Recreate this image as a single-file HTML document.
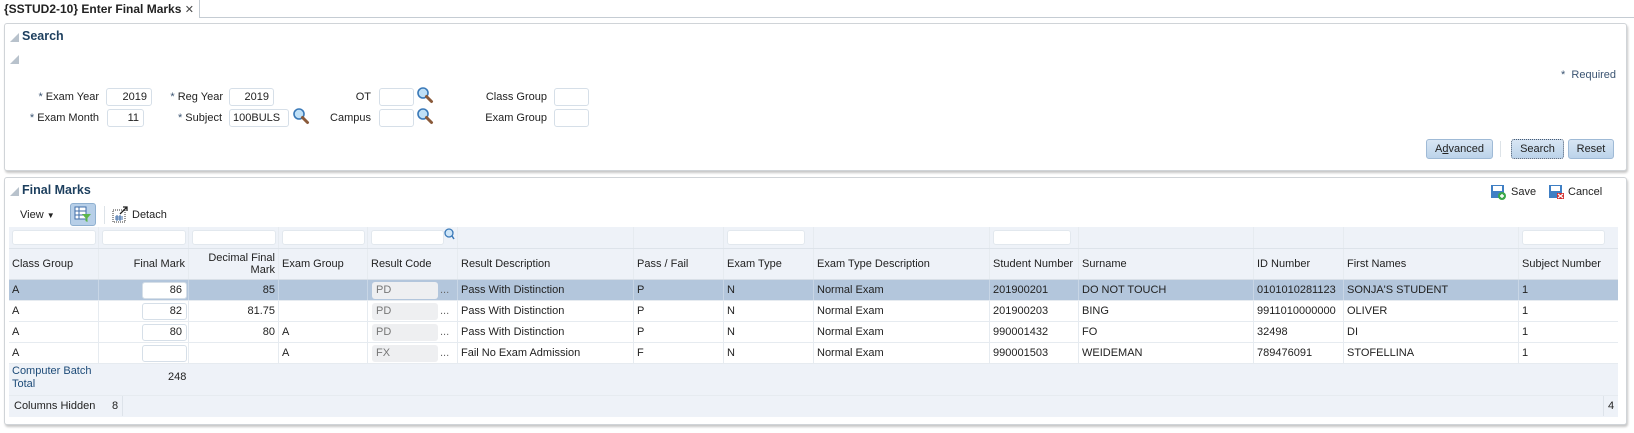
<!DOCTYPE html>
<html><head><meta charset="utf-8"><style>
*{box-sizing:border-box;margin:0;padding:0}
body{width:1634px;height:433px;background:#fff;font-family:"Liberation Sans",Tahoma,sans-serif;font-size:11px;color:#222;position:relative;overflow:hidden}
.a{position:absolute;white-space:nowrap}
.panel{position:absolute;border:1px solid #d0d4d8;border-radius:3px;background:#fff;box-shadow:1px 2px 2px #c8c8c8}
.tri{position:absolute;width:0;height:0;border-left:9px solid transparent;border-bottom:9px solid #b8c2cc}
.h{font-weight:bold;color:#1d3f5e;font-size:12.5px}
.inp{position:absolute;height:18px;border:1px solid #d6dfe8;border-radius:3px;background:#fff;text-align:right;padding-right:4px;line-height:16px}
.lbl{position:absolute;text-align:right;line-height:18px}
.btn{position:absolute;height:20px;border:1px solid #9fbad6;border-radius:3px;background:linear-gradient(#d8e6f4,#bcd3ea);text-align:center;line-height:18px;color:#222}
.row{position:absolute;left:9px;width:1609px;height:21px;border-bottom:1px solid #e6ebf0;background:#fff}
.c{position:absolute;top:0;height:100%;line-height:20px;padding:0 3px;border-right:1px solid #e6ebf0;overflow:hidden}
.r{text-align:right}
.fi{position:absolute;top:3px;height:15px;border:1px solid #e2e8ee;border-radius:3px;background:#fff}
.mi{position:absolute;height:17px;width:45px;border:1px solid #d6dfe8;border-radius:3px;background:#fff;text-align:right;padding-right:4px;line-height:15px;top:2px}
.rc{position:absolute;height:17px;width:66px;border-radius:3px;background:#eeeff1;color:#777;padding-left:4px;line-height:17px;top:2px}
</style></head><body>
<div class="a" style="left:0;top:17px;width:1634px;border-top:1px solid #c5ccd3"></div>
<div class="a" style="left:0;top:0;width:200px;height:18px;background:#fff;border-right:1px solid #c5ccd3"></div>
<div class="a" style="left:4px;top:2px;font-weight:bold;font-size:12px">{SSTUD2-10} Enter Final Marks <span style="font-weight:normal;font-size:11px;color:#444">✕</span></div>

<div class="panel" style="left:4px;top:23px;width:1623px;height:148px"></div>
<div class="tri" style="left:10px;top:33px"></div>
<div class="a h" style="left:22px;top:29px">Search</div>
<div class="tri" style="left:10px;top:55px"></div>
<div class="a" style="left:1561px;top:69px;color:#3b5472">* &nbsp;Required</div>

<div class="lbl" style="left:20px;top:88px;width:79px"><span style="color:#3b5472">*</span> Exam Year</div>
<div class="inp" style="left:106px;top:88px;width:46px">2019</div>
<div class="lbl" style="left:150px;top:88px;width:73px"><span style="color:#3b5472">*</span> Reg Year</div>
<div class="inp" style="left:229px;top:88px;width:45px">2019</div>
<div class="lbl" style="left:320px;top:88px;width:51px">OT</div>
<div class="inp" style="left:379px;top:88px;width:35px"></div>
<div class="lbl" style="left:460px;top:88px;width:87px">Class Group</div>
<div class="inp" style="left:554px;top:88px;width:35px"></div>

<div class="lbl" style="left:10px;top:109px;width:89px"><span style="color:#3b5472">*</span> Exam Month</div>
<div class="inp" style="left:107px;top:109px;width:37px">11</div>
<div class="lbl" style="left:150px;top:109px;width:72px"><span style="color:#3b5472">*</span> Subject</div>
<div class="inp" style="left:229px;top:109px;width:60px;text-align:left;padding-left:3px">100BULS</div>
<div class="lbl" style="left:300px;top:109px;width:71px">Campus</div>
<div class="inp" style="left:379px;top:109px;width:35px"></div>
<div class="lbl" style="left:460px;top:109px;width:87px">Exam Group</div>
<div class="inp" style="left:554px;top:109px;width:35px"></div>

<svg class="a" style="left:416px;top:86px" width="18" height="18" viewBox="0 0 18 18"><circle cx="7" cy="7" r="5" fill="#bfe0f7" stroke="#3a79b8" stroke-width="1.6"/><path d="M10.5 10.5 L15.5 15.5" stroke="#8a5a3a" stroke-width="3" stroke-linecap="round"/></svg>
<svg class="a" style="left:416px;top:107px" width="18" height="18" viewBox="0 0 18 18"><circle cx="7" cy="7" r="5" fill="#bfe0f7" stroke="#3a79b8" stroke-width="1.6"/><path d="M10.5 10.5 L15.5 15.5" stroke="#8a5a3a" stroke-width="3" stroke-linecap="round"/></svg>
<svg class="a" style="left:292px;top:107px" width="18" height="18" viewBox="0 0 18 18"><circle cx="7" cy="7" r="5" fill="#bfe0f7" stroke="#3a79b8" stroke-width="1.6"/><path d="M10.5 10.5 L15.5 15.5" stroke="#8a5a3a" stroke-width="3" stroke-linecap="round"/></svg>

<div class="btn" style="left:1426px;top:139px;width:67px">A<u>d</u>vanced</div>
<div class="a" style="left:1500px;top:141px;height:16px;border-left:1px solid #dde3e8"></div>
<div class="btn" style="left:1511px;top:139px;width:53px;border:1px dotted #4a5a70">Search</div>
<div class="btn" style="left:1568px;top:139px;width:46px">Reset</div>

<div class="panel" style="left:4px;top:177px;width:1623px;height:248px"></div>
<div class="tri" style="left:10px;top:187px"></div>
<div class="a h" style="left:22px;top:183px">Final Marks</div>
<svg class="a" style="left:1490px;top:184px" width="16" height="16" viewBox="0 0 16 16"><rect x="1" y="1" width="13" height="13" fill="#3f7fc4"/><rect x="3" y="2" width="9" height="5" fill="#fff"/><circle cx="12" cy="12" r="4" fill="#3aa84a"/><path d="M12 10v4M10 12h4" stroke="#fff" stroke-width="1.4"/></svg>
<div class="a" style="left:1511px;top:186px">Save</div>
<svg class="a" style="left:1548px;top:184px" width="16" height="16" viewBox="0 0 16 16"><rect x="1" y="1" width="13" height="13" fill="#3f7fc4"/><rect x="3" y="2" width="9" height="5" fill="#fff"/><rect x="9" y="9" width="7" height="6" fill="#d23030"/><path d="M10 10l5 4M15 10l-5 4" stroke="#fff" stroke-width="1.2"/></svg>
<div class="a" style="left:1568px;top:186px">Cancel</div>

<div class="a" style="left:20px;top:209px">View <span style="font-size:8px">▼</span></div>
<div class="a" style="left:70px;top:203px;width:26px;height:23px;border:1px solid #8fb0d0;border-radius:3px;background:#b7cfe8"></div>
<svg class="a" style="left:74px;top:206px" width="18" height="17" viewBox="0 0 18 17"><rect x="1" y="1" width="11" height="12" fill="#fff" stroke="#3f6ea8"/><path d="M1 5h11M1 9h11M5 1v12" stroke="#3f6ea8"/><path d="M8 8h9l-3.5 4v4l-2-1v-3z" fill="#5cb54a"/></svg>
<div class="a" style="left:104px;top:206px;height:18px;border-left:1px solid #dde3e8"></div>
<svg class="a" style="left:112px;top:206px" width="17" height="17" viewBox="0 0 17 17"><rect x="1" y="4" width="12" height="12" fill="#fff" stroke="#333" stroke-dasharray="1 1"/><path d="M3 11h8M3 13h8M5 9v6M8 9v6" stroke="#3f6ea8"/><path d="M8 8l7-7M11 1h4v4" stroke="#222" stroke-width="1.3" fill="none"/></svg>
<div class="a" style="left:132px;top:209px">Detach</div>

<div class="a" style="left:9px;top:227px;width:1609px;height:190px;background:#eef2f8"></div>
<div class="a" style="left:9px;top:227px;width:1609px;height:22px;border-bottom:1px solid #dde3ea">
<div class="c" style="left:0;width:90px"><div class="fi" style="left:3px;width:84px"></div></div>
<div class="c" style="left:90px;width:90px"><div class="fi" style="left:3px;width:84px"></div></div>
<div class="c" style="left:180px;width:90px"><div class="fi" style="left:3px;width:84px"></div></div>
<div class="c" style="left:270px;width:89px"><div class="fi" style="left:3px;width:83px"></div></div>
<div class="c" style="left:359px;width:90px"><div class="fi" style="left:3px;width:73px"></div><svg style="position:absolute;left:76px;top:1px" width="11" height="12" viewBox="0 0 11 12"><circle cx="5" cy="5" r="4" fill="#cfe6f8" stroke="#3a79b8" stroke-width="1.3"/><path d="M8 8l2 3" stroke="#3a79b8" stroke-width="1.5"/></svg></div>
<div class="c" style="left:449px;width:176px"></div>
<div class="c" style="left:625px;width:90px"></div>
<div class="c" style="left:715px;width:90px"><div class="fi" style="left:3px;width:78px"></div></div>
<div class="c" style="left:805px;width:176px"></div>
<div class="c" style="left:981px;width:89px"><div class="fi" style="left:3px;width:78px"></div></div>
<div class="c" style="left:1070px;width:175px"></div>
<div class="c" style="left:1245px;width:90px"></div>
<div class="c" style="left:1335px;width:175px"></div>
<div class="c" style="left:1510px;width:99px;border:none"><div class="fi" style="left:3px;width:83px"></div></div>
</div>
<div class="a" style="left:9px;top:249px;width:1609px;height:31px;border-bottom:1px solid #d8dfe7">
<div class="c" style="left:0;width:90px;line-height:30px">Class Group</div>
<div class="c r" style="left:90px;width:90px;line-height:30px">Final Mark</div>
<div class="c r" style="left:180px;width:90px;line-height:12px;padding-top:3px">Decimal Final<br>Mark</div>
<div class="c" style="left:270px;width:89px;line-height:30px">Exam Group</div>
<div class="c" style="left:359px;width:90px;line-height:30px">Result Code</div>
<div class="c" style="left:449px;width:176px;line-height:30px">Result Description</div>
<div class="c" style="left:625px;width:90px;line-height:30px">Pass / Fail</div>
<div class="c" style="left:715px;width:90px;line-height:30px">Exam Type</div>
<div class="c" style="left:805px;width:176px;line-height:30px">Exam Type Description</div>
<div class="c" style="left:981px;width:89px;line-height:30px">Student Number</div>
<div class="c" style="left:1070px;width:175px;line-height:30px">Surname</div>
<div class="c" style="left:1245px;width:90px;line-height:30px">ID Number</div>
<div class="c" style="left:1335px;width:175px;line-height:30px">First Names</div>
<div class="c" style="left:1510px;width:99px;line-height:30px;border:none">Subject Number</div>
</div>

<div class="row" style="top:280px;background:#b3c6dc">
<div class="c" style="left:0;width:90px;border-color:#c8d6e6">A</div>
<div class="c" style="left:90px;width:90px;border-color:#c8d6e6"><div class="mi" style="left:43px">86</div></div>
<div class="c r" style="left:180px;width:90px;border-color:#c8d6e6">85</div>
<div class="c" style="left:270px;width:89px;border-color:#c8d6e6"></div>
<div class="c" style="left:359px;width:90px;border-color:#c8d6e6"><div class="rc" style="left:4px">PD</div><span style="position:absolute;left:72px;color:#666">...</span></div>
<div class="c" style="left:449px;width:176px;border-color:#c8d6e6">Pass With Distinction</div>
<div class="c" style="left:625px;width:90px;border-color:#c8d6e6">P</div>
<div class="c" style="left:715px;width:90px;border-color:#c8d6e6">N</div>
<div class="c" style="left:805px;width:176px;border-color:#c8d6e6">Normal Exam</div>
<div class="c" style="left:981px;width:89px;border-color:#c8d6e6">201900201</div>
<div class="c" style="left:1070px;width:175px;border-color:#c8d6e6">DO NOT TOUCH</div>
<div class="c" style="left:1245px;width:90px;border-color:#c8d6e6">0101010281123</div>
<div class="c" style="left:1335px;width:175px;border-color:#c8d6e6">SONJA'S STUDENT</div>
<div class="c" style="left:1510px;width:99px;border:none">1</div>
</div>
<div class="row" style="top:301px">
<div class="c" style="left:0;width:90px">A</div>
<div class="c" style="left:90px;width:90px"><div class="mi" style="left:43px">82</div></div>
<div class="c r" style="left:180px;width:90px">81.75</div>
<div class="c" style="left:270px;width:89px"></div>
<div class="c" style="left:359px;width:90px"><div class="rc" style="left:4px">PD</div><span style="position:absolute;left:72px;color:#666">...</span></div>
<div class="c" style="left:449px;width:176px">Pass With Distinction</div>
<div class="c" style="left:625px;width:90px">P</div>
<div class="c" style="left:715px;width:90px">N</div>
<div class="c" style="left:805px;width:176px">Normal Exam</div>
<div class="c" style="left:981px;width:89px">201900203</div>
<div class="c" style="left:1070px;width:175px">BING</div>
<div class="c" style="left:1245px;width:90px">9911010000000</div>
<div class="c" style="left:1335px;width:175px">OLIVER</div>
<div class="c" style="left:1510px;width:99px;border:none">1</div>
</div>
<div class="row" style="top:322px">
<div class="c" style="left:0;width:90px">A</div>
<div class="c" style="left:90px;width:90px"><div class="mi" style="left:43px">80</div></div>
<div class="c r" style="left:180px;width:90px">80</div>
<div class="c" style="left:270px;width:89px">A</div>
<div class="c" style="left:359px;width:90px"><div class="rc" style="left:4px">PD</div><span style="position:absolute;left:72px;color:#666">...</span></div>
<div class="c" style="left:449px;width:176px">Pass With Distinction</div>
<div class="c" style="left:625px;width:90px">P</div>
<div class="c" style="left:715px;width:90px">N</div>
<div class="c" style="left:805px;width:176px">Normal Exam</div>
<div class="c" style="left:981px;width:89px">990001432</div>
<div class="c" style="left:1070px;width:175px">FO</div>
<div class="c" style="left:1245px;width:90px">32498</div>
<div class="c" style="left:1335px;width:175px">DI</div>
<div class="c" style="left:1510px;width:99px;border:none">1</div>
</div>
<div class="row" style="top:343px">
<div class="c" style="left:0;width:90px">A</div>
<div class="c" style="left:90px;width:90px"><div class="mi" style="left:43px"></div></div>
<div class="c r" style="left:180px;width:90px"></div>
<div class="c" style="left:270px;width:89px">A</div>
<div class="c" style="left:359px;width:90px"><div class="rc" style="left:4px">FX</div><span style="position:absolute;left:72px;color:#666">...</span></div>
<div class="c" style="left:449px;width:176px">Fail No Exam Admission</div>
<div class="c" style="left:625px;width:90px">F</div>
<div class="c" style="left:715px;width:90px">N</div>
<div class="c" style="left:805px;width:176px">Normal Exam</div>
<div class="c" style="left:981px;width:89px">990001503</div>
<div class="c" style="left:1070px;width:175px">WEIDEMAN</div>
<div class="c" style="left:1245px;width:90px">789476091</div>
<div class="c" style="left:1335px;width:175px">STOFELLINA</div>
<div class="c" style="left:1510px;width:99px;border:none">1</div>
</div>
<div class="a" style="left:12px;top:365px;color:#1d4b78;line-height:13px">Computer Batch<br>Total</div>
<div class="a" style="left:168px;top:371px">248</div>
<div class="a" style="left:9px;top:395px;width:1609px;height:22px;border-top:1px solid #e6ebf0"></div>
<div class="a" style="left:14px;top:400px">Columns Hidden</div>
<div class="a" style="left:112px;top:400px">8</div>
<div class="a" style="left:122px;top:396px;height:20px;border-left:1px solid #dde3ea"></div>
<div class="a" style="left:1603px;top:396px;height:20px;border-left:1px solid #dde3ea"></div>
<div class="a" style="left:1608px;top:400px">4</div>
</body></html>
